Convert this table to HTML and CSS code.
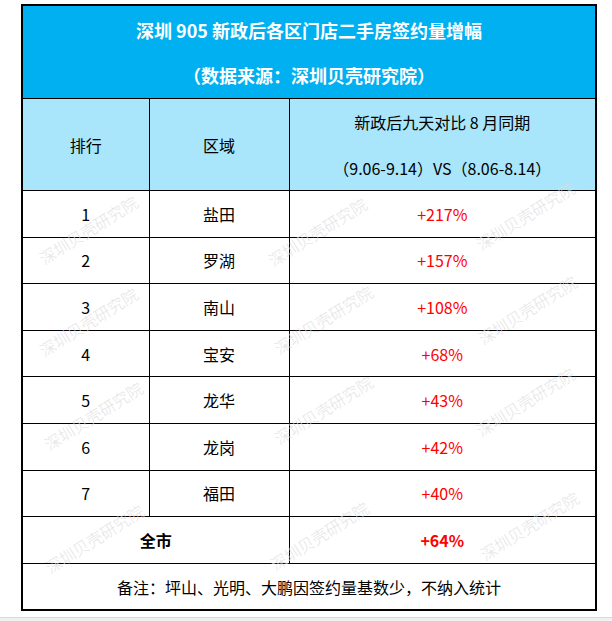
FILE: index.html
```html
<!DOCTYPE html>
<html lang="zh-CN">
<head>
<meta charset="utf-8">
<title>深圳905新政后各区门店二手房签约量增幅</title>
<link rel="stylesheet" href="styles.css">
</head>
<body>
<div class="page">
  <div class="sheet">
    <table class="grid">
      <colgroup>
        <col class="c1"><col class="c2"><col class="c3">
      </colgroup>
      <tr class="title-row">
        <td colspan="3">
          <div class="title">深圳 905 新政后各区门店二手房签约量增幅</div>
          <div class="title sub">（数据来源：深圳贝壳研究院）</div>
        </td>
      </tr>
      <tr class="head-row">
        <td>排行</td>
        <td>区域</td>
        <td>
          <div class="h1">新政后九天对比 8 月同期</div>
          <div class="h2">（9.06-9.14）VS（8.06-8.14）</div>
        </td>
      </tr>
      <tr class="row"><td>1</td><td>盐田</td><td class="pct">+217%</td></tr>
      <tr class="row"><td>2</td><td>罗湖</td><td class="pct">+157%</td></tr>
      <tr class="row"><td>3</td><td>南山</td><td class="pct">+108%</td></tr>
      <tr class="row"><td>4</td><td>宝安</td><td class="pct">+68%</td></tr>
      <tr class="row"><td>5</td><td>龙华</td><td class="pct">+43%</td></tr>
      <tr class="row"><td>6</td><td>龙岗</td><td class="pct">+42%</td></tr>
      <tr class="row"><td>7</td><td>福田</td><td class="pct">+40%</td></tr>
      <tr class="row total"><td colspan="2">全市</td><td class="pct">+64%</td></tr>
      <tr class="row note"><td colspan="3">备注：坪山、光明、大鹏因签约量基数少，不纳入统计</td></tr>
    </table>
    <div class="wm" style="left:45px;top:250px">深圳贝壳研究院</div>
    <div class="wm" style="left:274px;top:252px">深圳贝壳研究院</div>
    <div class="wm" style="left:482px;top:236px">深圳贝壳研究院</div>
    <div class="wm" style="left:45px;top:342px">深圳贝壳研究院</div>
    <div class="wm" style="left:280px;top:340px">深圳贝壳研究院</div>
    <div class="wm" style="left:484px;top:330px">深圳贝壳研究院</div>
    <div class="wm" style="left:50px;top:436px">深圳贝壳研究院</div>
    <div class="wm" style="left:280px;top:430px">深圳贝壳研究院</div>
    <div class="wm" style="left:482px;top:422px">深圳贝壳研究院</div>
    <div class="wm" style="left:51px;top:559px">深圳贝壳研究院</div>
    <div class="wm" style="left:276px;top:556px">深圳贝壳研究院</div>
    <div class="wm" style="left:486px;top:546px">深圳贝壳研究院</div>
  </div>
  <div class="strip"></div>
</div>
</body>
</html>
```
FILE: styles.css
```css
html, body {
  margin: 0;
  padding: 0;
  background: #ffffff;
}
body {
  font-family: "Noto Sans CJK SC", "Noto Sans", sans-serif;
  color: #000;
}
.page {
  width: 612px;
  height: 621px;
  position: relative;
  overflow: hidden;
}
.sheet {
  position: relative;
  padding: 4px 0 0 21px;
  height: 613px;
}
.grid {
  border-collapse: collapse;
  table-layout: fixed;
  width: 574px;
  border: 2px solid #000;
}
.c1 { width: 127px; }
.c2 { width: 140px; }
.c3 { width: 307px; }
.grid td {
  border: 1.5px solid #000;
  text-align: center;
  vertical-align: middle;
  padding: 0;
  font-size: 16px;
  line-height: 20px;
}
.title-row td {
  background: #00b0f0;
  height: 92px;
}
.title {
  color: #fff;
  font-weight: bold;
  font-size: 18px;
  line-height: 22px;
}
.title.sub {
  margin-top: 23px;
}
.head-row td {
  background: #a9e6fb;
  height: 91px;
}
.h2 {
  margin-top: 26px;
}
.row td {
  height: 45.6px;
}
.pct {
  color: #ff0000;
}
.total td {
  font-weight: bold;
}
.wm {
  position: absolute;
  color: #dedede;
  font-size: 16px;
  font-weight: 300;
  line-height: 16px;
  white-space: nowrap;
  transform: rotate(-32deg);
  transform-origin: 0 100%;
  pointer-events: none;
  opacity: 0.8;
}
.strip {
  position: absolute;
  left: 0;
  right: 0;
  top: 617px;
  height: 4px;
  background: #f0f0f0;
  border-top: 1px solid #d8d8d8;
}
```
